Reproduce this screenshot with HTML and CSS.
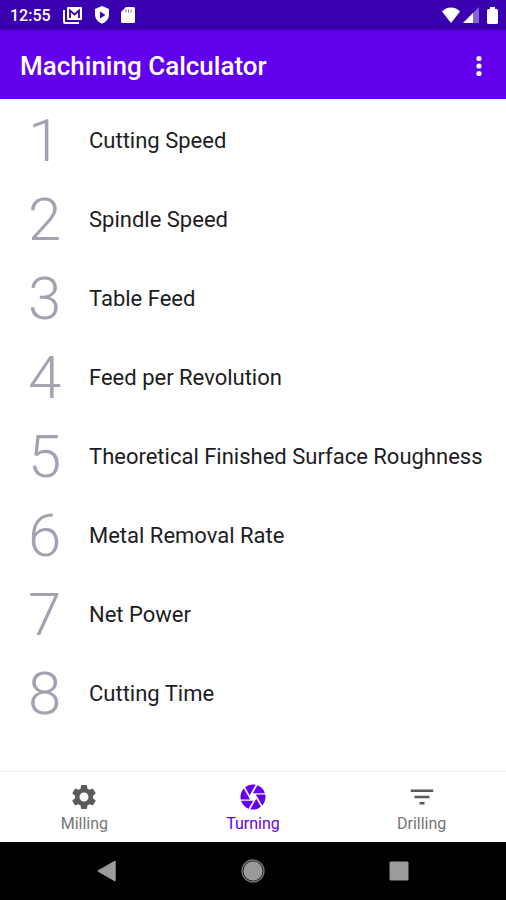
FILE: index.html
```html
<!DOCTYPE html>
<html lang="en">
<head>
    <meta charset="UTF-8">
    <meta name="viewport" content="width=device-width, initial-scale=1.0">
    <title>Machining Calculator</title>
    <link rel="stylesheet" href="styles.css">
</head>
<body>
    <div class="status-bar">
        <span class="status-time">12:55</span>
        <div class="status-icons">
            <svg width="20" height="18" viewBox="0 0 20 18" aria-hidden="true">
                <path d="M1 4v11.500q0 1.500 1.500 1.500H16" fill="none" stroke="#fff" stroke-width="2"/>
                <rect x="4" y="1" width="15" height="13" rx="1" fill="#fff"/>
                <path d="M7 12V4.500l4.500 4 4.500-4V12" fill="none" stroke="#3a00b0" stroke-width="1.800"/>
            </svg>
            <svg width="16" height="18" viewBox="0 0 16 18" aria-hidden="true">
                <path d="M8 0l7 3v5.500c0 4.300-3 7.700-7 9.200-4-1.500-7-4.900-7-9.200V3z" fill="#fff"/>
                <path d="M6 5.500v7l5.500-3.500z" fill="#3a00b0"/>
            </svg>
            <svg width="14" height="16" viewBox="0 0 14 16" aria-hidden="true">
                <path d="M5 0h7.500q1.500 0 1.500 1.500v13q0 1.500-1.500 1.500h-11Q0 16 0 14.500V5z" fill="#fff"/>
                <path d="M5 2.500v3M7.500 2.500v3M10 2.500v3" stroke="#8a66d8" stroke-width="1"/>
            </svg>
        </div>
        <div class="status-signal">
            <svg width="18" height="16" viewBox="0 0 18 16" aria-hidden="true">
                <path d="M9 16L0 4.500C2.500 1.800 5.500.5 9 .5s6.500 1.300 9 4z" fill="#fff"/>
            </svg>
            <svg width="16" height="16" viewBox="0 0 16 16" aria-hidden="true">
                <path d="M16 0v16H0z" fill="#fff" opacity=".4"/>
                <path d="M10 6v10H0z" fill="#fff"/>
            </svg>
            <svg class="battery" width="11" height="17" viewBox="0 0 11 17" aria-hidden="true">
                <path d="M3 0h5v2h1.500Q11 2 11 3.500v12q0 1.500-1.500 1.500h-8Q0 17 0 15.500v-12Q0 2 1.500 2H3z" fill="#fff"/>
            </svg>
        </div>
    </div>

    <header class="app-bar">
        <h1>Machining Calculator</h1>
        <button type="button" class="menu-button" aria-label="More options">
            <svg width="6" height="22" viewBox="0 0 6 22" fill="#fff" aria-hidden="true">
                <circle cx="3" cy="3.500" r="2.600"/>
                <circle cx="3" cy="11" r="2.600"/>
                <circle cx="3" cy="18.500" r="2.600"/>
            </svg>
        </button>
    </header>

    <main class="content">
        <ul class="calc-list">
            <li><a href="#cutting-speed"><span class="number">1</span><span>Cutting Speed</span></a></li>
            <li><a href="#spindle-speed"><span class="number">2</span><span>Spindle Speed</span></a></li>
            <li><a href="#table-feed"><span class="number">3</span><span>Table Feed</span></a></li>
            <li><a href="#feed-per-revolution"><span class="number">4</span><span>Feed per Revolution</span></a></li>
            <li><a href="#surface-roughness"><span class="number">5</span><span>Theoretical Finished Surface Roughness</span></a></li>
            <li><a href="#metal-removal-rate"><span class="number">6</span><span>Metal Removal Rate</span></a></li>
            <li><a href="#net-power"><span class="number">7</span><span>Net Power</span></a></li>
            <li><a href="#cutting-time"><span class="number">8</span><span>Cutting Time</span></a></li>
        </ul>
    </main>

    <nav class="bottom-nav">
        <a href="#milling">
            <svg width="30" height="30" viewBox="0 0 24 24" aria-hidden="true">
                <path fill="currentColor" d="M19.140 12.940c.04-.3.06-.61.06-.94 0-.32-.02-.64-.07-.94l2.030-1.580c.18-.14.23-.41.12-.61l-1.920-3.320c-.12-.22-.37-.29-.59-.22l-2.390.96c-.5-.38-1.030-.7-1.620-.94l-.36-2.540c-.04-.24-.24-.41-.48-.41h-3.840c-.24 0-.43.17-.47.41l-.36 2.540c-.59.24-1.130.57-1.620.94l-2.390-.96c-.22-.08-.47 0-.59.22L2.740 8.870c-.12.21-.08.47.12.61l2.030 1.580c-.05.3-.09.63-.09.94s.02.64.07.94l-2.030 1.580c-.18.14-.23.41-.12.61l1.920 3.320c.12.22.37.29.59.22l2.390-.96c.5.38 1.030.7 1.620.94l.36 2.540c.05.24.24.41.48.41h3.840c.24 0 .44-.17.47-.41l.36-2.540c.59-.24 1.130-.56 1.620-.94l2.390.96c.22.08.47 0 .59-.22l1.920-3.320c.12-.22.07-.47-.12-.61l-2.010-1.580zM12 15.600c-1.980 0-3.600-1.620-3.600-3.600s1.620-3.600 3.600-3.600 3.600 1.620 3.600 3.600-1.620 3.600-3.600 3.600z"/>
            </svg>
            <span>Milling</span>
        </a>
        <a href="#turning" class="active" aria-current="page">
            <svg width="30" height="30" viewBox="0 0 24 24" aria-hidden="true">
                <path fill="currentColor" d="M9.400 10.500l4.770-8.260C13.470 2.090 12.750 2 12 2c-2.400 0-4.600.85-6.320 2.250l3.660 6.350.06-.1zM21.540 9c-.92-2.920-3.150-5.260-6-6.340L11.880 9h9.660zm.26 1h-7.490l.29.5 4.760 8.250C21 16.970 22 14.610 22 12c0-.69-.07-1.350-.2-2zM8.540 12l-3.900-6.750C3.010 7.030 2 9.390 2 12c0 .69.07 1.350.2 2h7.490l-1.150-2zm-6.080 3c.92 2.920 3.150 5.260 6 6.340L12.120 15H2.460zm11.270 0l-3.900 6.760c.7.15 1.420.24 2.170.24 2.400 0 4.600-.85 6.320-2.250l-3.660-6.350-.93 1.600z"/>
            </svg>
            <span>Turning</span>
        </a>
        <a href="#drilling">
            <svg width="30" height="30" viewBox="0 0 24 24" aria-hidden="true">
                <path fill="currentColor" d="M10 18h4v-2h-4v2zM3 6v2h18V6H3zm3 7h12v-2H6v2z"/>
            </svg>
            <span>Drilling</span>
        </a>
    </nav>

    <div class="system-bar">
        <button type="button" aria-label="Back">
            <svg width="24" height="24" viewBox="0 0 24 24" aria-hidden="true">
                <path d="M20 2.500v19L3.500 12z" fill="#9b9b9b" stroke="#9b9b9b" stroke-width="1.500" stroke-linejoin="round"/>
            </svg>
        </button>
        <button type="button" aria-label="Home">
            <svg width="24" height="24" viewBox="0 0 24 24" aria-hidden="true">
                <circle cx="12" cy="12" r="11" fill="none" stroke="#777" stroke-width="1.300"/>
                <circle cx="12" cy="12" r="9.700" fill="#999"/>
            </svg>
        </button>
        <button type="button" aria-label="Recent apps">
            <svg width="24" height="24" viewBox="0 0 24 24" aria-hidden="true">
                <rect x="2.500" y="2.500" width="19" height="19" rx="1.500" fill="#9b9b9b"/>
            </svg>
        </button>
    </div>
</body>
</html>
```
FILE: styles.css
```css
:root {
    --primary-color: #6200ee;
    --primary-dark: #3a00b0;
    --text-color: #1c1c22;
    --number-color: #a2a2b0;
    --nav-color: #757575;
}

* {
    box-sizing: border-box;
    margin: 0;
    padding: 0;
}

body {
    font-family: Roboto, 'Liberation Sans', sans-serif;
    background-color: white;
    color: var(--text-color);
    min-height: 100vh;
    display: flex;
    flex-direction: column;
}

a {
    color: inherit;
    text-decoration: none;
}

button {
    background: none;
    border: none;
    cursor: pointer;
}

svg {
    display: block;
}

/* Status bar */
.status-bar {
    height: 30px;
    padding: 0 8px 0 10px;
    display: flex;
    align-items: center;
    gap: 12px;
    background-color: var(--primary-dark);
    color: white;
}

.status-time {
    font-size: 16px;
    font-weight: 500;
}

.status-icons,
.status-signal {
    display: flex;
    align-items: center;
    gap: 11px;
}

.status-signal {
    margin-left: auto;
    gap: 3px;
}

.battery {
    margin-left: 5px;
}

/* App bar */
.app-bar {
    height: 69px;
    padding: 2px 16px 0 20px;
    display: flex;
    align-items: center;
    justify-content: space-between;
    background-color: var(--primary-color);
    color: white;
}

.app-bar h1 {
    font-size: 26px;
    font-weight: 500;
}

.menu-button {
    padding: 8px;
}

/* List */
.content {
    flex: 1;
    padding-top: 2px;
}

.calc-list {
    list-style: none;
}

.calc-list a {
    height: 79px;
    padding: 0 16px 0 28px;
    display: flex;
    align-items: center;
    font-size: 22px;
    white-space: nowrap;
}

.number {
    width: 61px;
    font-size: 60px;
    font-weight: 300;
    color: var(--number-color);
}

/* Bottom navigation */
.bottom-nav {
    height: 71px;
    padding-top: 10px;
    display: flex;
    border-top: 1px solid #f0f0f0;
    color: var(--nav-color);
}

.bottom-nav a {
    flex: 1;
    display: flex;
    flex-direction: column;
    align-items: center;
    gap: 3px;
    font-size: 16px;
    line-height: 18px;
}

.bottom-nav svg {
    color: #5a5a5a;
}

.bottom-nav .active,
.bottom-nav .active svg {
    color: var(--primary-color);
}

/* System buttons */
.system-bar {
    height: 58px;
    padding: 0 34px;
    display: flex;
    align-items: center;
    background-color: black;
}

.system-bar button {
    flex: 1;
    display: flex;
    justify-content: center;
}
```
